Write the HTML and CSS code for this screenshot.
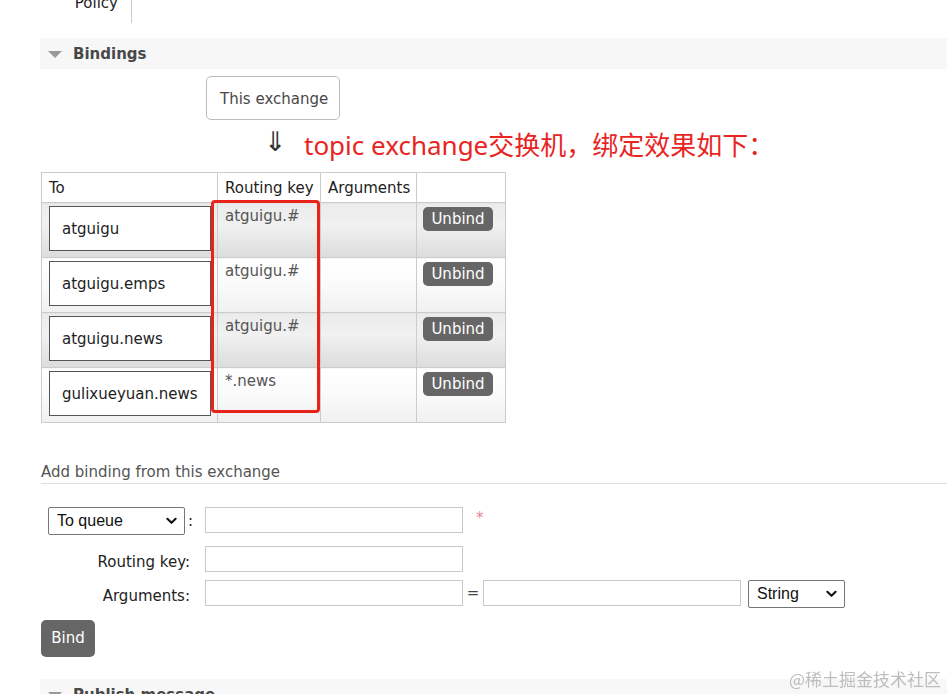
FILE: index.html
```html
<!DOCTYPE html>
<html>
<head>
<meta charset="utf-8">
<link rel="stylesheet" href="styles.css">
</head>
<body>
<div class="page">
  <div class="prev"><span class="prev-text">Policy</span></div>

  <h2 class="section-h"><span class="tri"></span>Bindings</h2>
  <div class="section-body">
    <div class="exchange-box">This exchange</div>
    <div class="arrow-row">
      <span class="arrow">⇓</span>
      <span class="note">topic exchange交换机，绑定效果如下：</span>
    </div>
    <div class="table-wrap">
      <table class="list">
        <colgroup>
          <col class="c-to"><col class="c-rk"><col class="c-args"><col class="c-act">
        </colgroup>
        <thead>
          <tr><th>To</th><th>Routing key</th><th>Arguments</th><th></th></tr>
        </thead>
        <tbody>
          <tr class="alt1">
            <td class="to"><span class="queue-box">atguigu</span></td>
            <td class="rk">atguigu.#</td><td></td>
            <td class="act"><span class="btn-sm">Unbind</span></td>
          </tr>
          <tr class="alt2">
            <td class="to"><span class="queue-box">atguigu.emps</span></td>
            <td class="rk">atguigu.#</td><td></td>
            <td class="act"><span class="btn-sm">Unbind</span></td>
          </tr>
          <tr class="alt1">
            <td class="to"><span class="queue-box">atguigu.news</span></td>
            <td class="rk">atguigu.#</td><td></td>
            <td class="act"><span class="btn-sm">Unbind</span></td>
          </tr>
          <tr class="alt2">
            <td class="to"><span class="queue-box">gulixueyuan.news</span></td>
            <td class="rk">*.news</td><td></td>
            <td class="act"><span class="btn-sm">Unbind</span></td>
          </tr>
        </tbody>
      </table>
      <div class="highlight"></div>
    </div>

    <h3 class="sub-h">Add binding from this exchange</h3>
    <div class="form">
      <div class="form-row r1">
        <div class="lbl lbl-select"><span class="select wide"><span>To queue</span><svg class="chev" viewBox="0 0 12 8" width="11" height="8"><path d="M1.5 1.5 L6 6 L10.5 1.5" fill="none" stroke="#111" stroke-width="2.2" stroke-linecap="round" stroke-linejoin="round"/></svg></span><span class="colon">:</span></div>
        <div class="field"><span class="input"></span><span class="req">*</span></div>
      </div>
      <div class="form-row r2">
        <div class="lbl">Routing key:</div>
        <div class="field"><span class="input"></span></div>
      </div>
      <div class="form-row r3">
        <div class="lbl">Arguments:</div>
        <div class="field"><span class="input"></span><span class="eq">=</span><span class="input"></span><span class="select type"><span>String</span><svg class="chev" viewBox="0 0 12 8" width="11" height="8"><path d="M1.5 1.5 L6 6 L10.5 1.5" fill="none" stroke="#111" stroke-width="2.2" stroke-linecap="round" stroke-linejoin="round"/></svg></span></div>
      </div>
      <div class="btn-bind">Bind</div>
    </div>
  </div>

  <h2 class="section-h next"><span class="tri"></span>Publish message</h2>
</div>
<div class="watermark">@稀土掘金技术社区</div>
</body>
</html>
```

FILE: styles.css
```css
* { box-sizing: border-box; }
html, body { margin: 0; padding: 0; background: #fff; }
body {
  font-family: "DejaVu Sans", Verdana, sans-serif;
  font-size: 15px;
  color: #333;
  overflow: hidden;
}
.page { padding-left: 41px; }

.prev {
  width: 91px;
  height: 23px;
  border-right: 1px solid #ccc;
  text-align: right;
  padding-right: 13px;
  overflow: hidden;
}
.prev-text { display: block; margin-top: -6px; line-height: 18px; color: #222; }

.section-h {
  margin: 15px 0 0 -1px;
  height: 31px;
  background: #f7f7f7;
  display: flex;
  align-items: center;
  padding-left: 8px;
  font-size: 15px;
  font-weight: bold;
  color: #484848;
}
.tri {
  width: 0; height: 0;
  border-left: 7px solid transparent;
  border-right: 7px solid transparent;
  border-top: 7px solid #9a9a9a;
  margin-right: 11px;
  margin-top: 1px;
}
.section-h.next { margin-top: 22px; }

.exchange-box {
  margin: 7px 0 0 165px;
  width: 134px;
  height: 44px;
  border: 1px solid #bbb;
  border-radius: 5px;
  padding: 2px 0 0 13px;
  line-height: 40px;
  color: #484848;
}

.arrow-row {
  height: 52px;
  display: flex;
  align-items: center;
  padding-left: 223px;
}
.arrow { font-size: 27px; color: #333; width: 40px; margin-top: -10px; }
.note {
  font-family: "Noto Sans", "Noto Sans CJK SC", sans-serif;
  font-size: 26px;
  color: #e8251f;
  margin-top: -4px;
}

.table-wrap { position: relative; display: inline-block; vertical-align: top; }
table.list {
  border-collapse: collapse;
  table-layout: fixed;
  width: 464px;
}
.c-to { width: 176px; }
.c-rk { width: 103px; }
.c-args { width: 96px; }
.c-act { width: 89px; }
table.list th, table.list td { border: 1px solid #ccc; }
table.list th {
  height: 30px;
  padding: 0 7px;
  text-align: left;
  font-weight: normal;
  color: #222;
  white-space: nowrap;
}
table.list td { height: 55px; vertical-align: top; padding: 0; }
table.list tr.alt1 td { background: linear-gradient(#ebebeb 0%, #f1f1f1 40%, #dcdcdc 100%); }
table.list tr.alt2 td { background: linear-gradient(#ffffff 0%, #fafafa 50%, #f0f0f0 100%); }
table.list td.to { padding: 3px 0 0 7px; }
.queue-box {
  display: block;
  width: 162px;
  height: 45px;
  border: 1px solid #555;
  background: #fff;
  padding-left: 12px;
  line-height: 45px;
  color: #222;
  white-space: nowrap;
}
table.list td.rk { padding: 4px 7px 0; color: #555; }
table.list td.act { padding: 4px 0 0 6px; }
.btn-sm {
  display: inline-block;
  width: 70px;
  height: 24px;
  line-height: 24px;
  text-align: center;
  background: #666;
  color: #fff;
  border-radius: 5px;
}
.highlight {
  position: absolute;
  left: 170px;
  top: 28px;
  width: 109px;
  height: 213px;
  border: 3px solid #e8231b;
  border-radius: 4px;
}

.sub-h {
  margin: 40px 0 0;
  padding-bottom: 2px;
  border-bottom: 1px solid #ddd;
  font-size: 15px;
  font-weight: normal;
  color: #555;
  line-height: 18px;
}

.form { padding-top: 23px; }
.form-row { display: grid; grid-template-columns: 164px auto; align-items: start; }
.r1 { height: 28px; margin-bottom: 11px; }
.r2 { height: 26px; margin-bottom: 8px; }
.r3 { height: 28px; }
.lbl { text-align: right; padding-right: 15px; line-height: 26px; color: #222; padding-top: 3px; }
.lbl-select { text-align: left; padding: 0 0 0 7px; display: flex; align-items: center; }
.colon { margin-left: 3px; line-height: 28px; }
.field { display: flex; align-items: flex-start; }
.input {
  display: block;
  width: 258px;
  height: 26px;
  border: 1px solid #c8c8c8;
  background: #fff;
}
.req { color: #e87f9a; margin-left: 13px; margin-top: 2px; font-size: 15px; }
.eq { width: 20px; text-align: center; line-height: 26px; color: #444; }
.select {
  display: flex;
  align-items: center;
  justify-content: space-between;
  height: 28px;
  border: 1px solid #767676;
  border-radius: 2px;
  background: #fff;
  font-family: "Liberation Sans", Arial, sans-serif;
  font-size: 16px;
  color: #111;
  padding: 0 7px 0 8px;
}
.select.wide { width: 137px; }
.select.type { width: 97px; margin-left: 7px; }
.chev { display: block; }
.btn-bind {
  margin-top: 12px;
  width: 54px;
  height: 37px;
  line-height: 37px;
  text-align: center;
  background: #666;
  color: #fff;
  border-radius: 5px;
}

.watermark {
  position: fixed;
  right: 6px;
  bottom: 5px;
  font-family: "Noto Sans CJK SC", sans-serif;
  font-size: 17px;
  color: #bdbdbd;
  line-height: 20px;
}
```
